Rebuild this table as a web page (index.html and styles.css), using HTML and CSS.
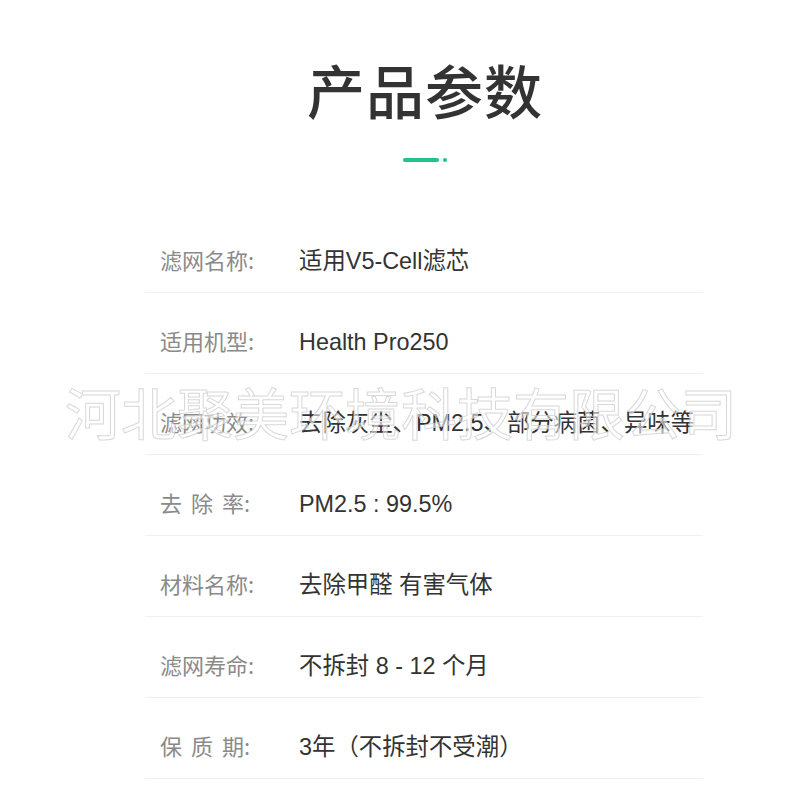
FILE: index.html
```html
<!DOCTYPE html>
<html lang="zh">
<head>
<meta charset="utf-8">
<link rel="stylesheet" href="styles.css">
</head>
<body>
<div class="page">
  <header class="header">
    <h1 class="title">产品参数</h1>
    <div class="accent"><span class="accent-bar"></span><span class="accent-dot"></span></div>
  </header>
  <div class="table">
    <div class="row"><span class="label">滤网名称:</span><span class="value">适用V5-Cell滤芯</span></div>
    <div class="row"><span class="label">适用机型:</span><span class="value">Health Pro250</span></div>
    <div class="row"><span class="label">滤网功效:</span><span class="value">去除灰尘、PM2.5、部分病菌、异味等</span></div>
    <div class="row"><span class="label"><span class="spaced">去除</span>率:</span><span class="value">PM2.5 : 99.5%</span></div>
    <div class="row"><span class="label">材料名称:</span><span class="value">去除甲醛 有害气体</span></div>
    <div class="row"><span class="label">滤网寿命:</span><span class="value">不拆封 8 - 12 个月</span></div>
    <div class="row"><span class="label"><span class="spaced">保质</span>期:</span><span class="value">3年（不拆封不受潮）</span></div>
  </div>
  <div class="watermark">河北聚美环境科技有限公司</div>
</div>
</body>
</html>
```
FILE: styles.css
```css
html, body {
  margin: 0;
  padding: 0;
  background: #ffffff;
}
body {
  font-family: "Liberation Sans", "Noto Sans CJK SC", sans-serif;
  width: 800px;
  height: 800px;
  overflow: hidden;
}
.page {
  position: relative;
  padding-left: 145px;
  padding-right: 97px;
}
.header {
  display: flex;
  flex-direction: column;
  align-items: center;
  padding-left: 2px;
}
.title {
  margin: 58px 0 0 0;
  font-family: "Noto Sans CJK SC", sans-serif;
  font-size: 58px;
  line-height: 62px;
  font-weight: 500;
  color: #333333;
  letter-spacing: 1px;
}
.accent {
  display: flex;
  align-items: center;
  gap: 4px;
  margin-top: 38px;
  height: 4px;
}
.accent-bar {
  width: 36px;
  height: 4px;
  border-radius: 2px;
  background: #22c48c;
}
.accent-dot {
  width: 4px;
  height: 4px;
  border-radius: 50%;
  background: #22c48c;
}
.table {
  margin-top: 50px;
}
.row {
  display: flex;
  align-items: baseline;
  padding: 35px 0 21px 15px;
  border-bottom: 1px solid #f0f0f0;
  height: 24px;
}
.label {
  width: 139px;
  flex: none;
  font-family: "Noto Sans CJK SC", sans-serif;
  font-size: 22px;
  line-height: 24px;
  color: #8a8a8a;
  white-space: nowrap;
}
.spaced {
  letter-spacing: 9px;
}
.value {
  font-size: 23.4px;
  line-height: 24px;
  color: #333333;
  font-family: "Liberation Sans", "Noto Sans CJK SC", sans-serif;
  white-space: nowrap;
}
.watermark {
  position: absolute;
  left: 65px;
  top: 381px;
  font-family: "Noto Sans CJK SC", sans-serif;
  font-size: 56px;
  line-height: 60px;
  white-space: nowrap;
  color: rgba(255, 255, 255, 0.55);
  -webkit-text-stroke: 1px rgba(200, 200, 200, 0.7);
  pointer-events: none;
}
```
